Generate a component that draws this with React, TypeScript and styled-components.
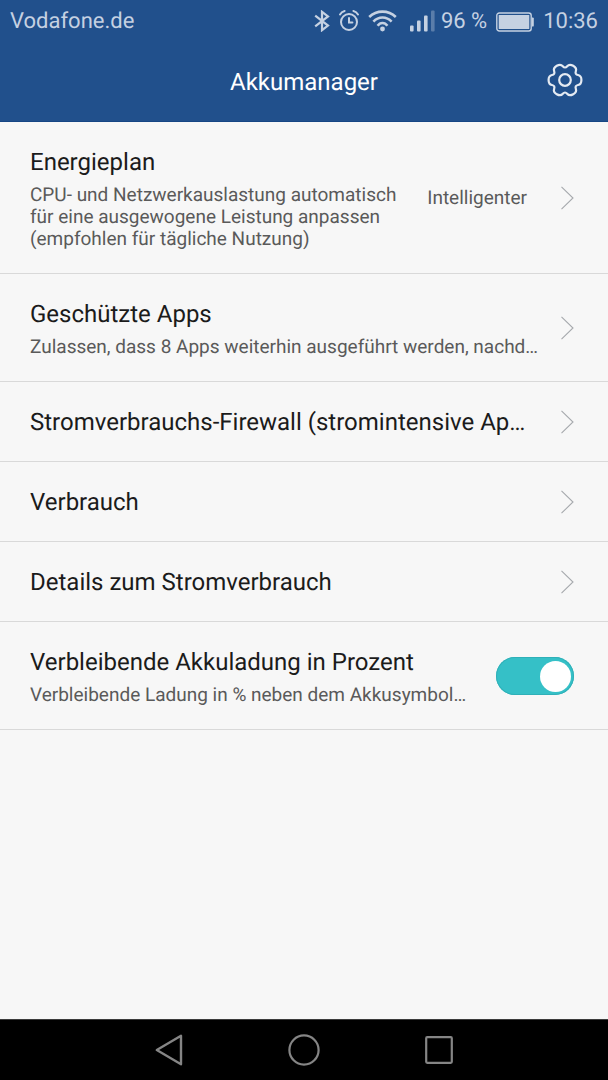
import React, { useState } from 'react';
import styled, { createGlobalStyle } from 'styled-components';

const GlobalStyle = createGlobalStyle`
  *, *::before, *::after { box-sizing: border-box; }
  body {
    margin: 0;
    background: #f7f7f7;
    font-family: Roboto, "Noto Sans", sans-serif;
    text-rendering: geometricPrecision;
  }
  button {
    margin: 0;
    border: 0;
    padding: 0;
    background: none;
    color: inherit;
    font: inherit;
    text-align: left;
    text-rendering: inherit;
    cursor: pointer;
  }
  svg { display: block; flex: none; }
`;

const Screen = styled.div`
  display: flex;
  flex-direction: column;
  min-height: 100vh;
  background: #f7f7f7;
`;

const Header = styled.header`
  background: #21508c;
  border-bottom: 1px solid #164684;
`;

const StatusBar = styled.div`
  display: flex;
  align-items: center;
  height: 42px;
  padding: 2px 10px 0;
  color: #c5d1e2;
  font-size: 22px;
  line-height: 28px;
`;

const Carrier = styled.span`
  flex: 1;
`;

const StatusIcons = styled.div`
  display: flex;
  align-items: center;
  gap: 9px;
  margin-right: 6px;
  padding-bottom: 2px;
`;

const SignalGap = styled.span`
  margin-left: 4px;
`;

const BatteryGroup = styled.div`
  display: flex;
  align-items: center;
  gap: 9px;
`;

const AppBar = styled.div`
  display: grid;
  grid-template-columns: 1fr auto 1fr;
  align-items: center;
  height: 79px;
  padding: 0 25px;
`;

const AppTitle = styled.h1`
  grid-column: 2;
  margin: 0;
  color: #fff;
  font-size: 24px;
  font-weight: 400;
  line-height: 32px;
`;

const SettingsButton = styled.button`
  justify-self: end;
  padding-bottom: 3px;
`;

const Content = styled.main`
  flex: 1;
`;

const List = styled.ul`
  margin: 0;
  padding: 0;
  list-style: none;
`;

const Item = styled.li`
  border-bottom: 1px solid #d9d9d9;
`;

const RowButton = styled.button`
  display: flex;
  align-items: center;
  width: 100%;
  padding: 24px 34px 23px 30px;
`;

const RowLabel = styled.label`
  display: flex;
  align-items: center;
  width: 100%;
  padding: 24px 34px 23px 30px;
  cursor: pointer;
`;

const TextBlock = styled.span`
  display: flex;
  flex: 1;
  flex-direction: column;
  gap: 6px;
  min-width: 0;
  margin-right: 20px;
`;

const ItemTitle = styled.span`
  overflow: hidden;
  color: #1b1b1b;
  font-size: 24px;
  line-height: 32px;
  text-overflow: ellipsis;
  white-space: nowrap;
`;

const Summary = styled.span<{ $wrap?: boolean }>`
  overflow: hidden;
  color: #5a5a5a;
  font-size: 19px;
  line-height: 22px;
  text-overflow: ellipsis;
  white-space: ${(p) => (p.$wrap ? 'normal' : 'nowrap')};
`;

const Value = styled.span`
  margin-right: 33px;
  color: #5a5a5a;
  font-size: 19px;
  line-height: 22px;
`;

const Switch = styled.input`
  appearance: none;
  display: flex;
  flex: none;
  align-items: center;
  width: 78px;
  height: 38px;
  margin: 0;
  padding: 0 3px;
  border-radius: 19px;
  background: #b8b8b8;
  cursor: pointer;

  &::before {
    content: "";
    width: 31px;
    height: 31px;
    border-radius: 50%;
    background: #fff;
  }

  &:checked {
    justify-content: flex-end;
    background: #35c0c7;
    box-shadow: inset 0 0 0 1px #2fb0b8;
  }
`;

const NavBar = styled.nav`
  display: flex;
  height: 61px;
  padding: 0 102px;
  border-top: 1px solid #3c3c3c;
  background: #000;
`;

const NavButton = styled.button`
  display: flex;
  flex: 1;
  align-items: center;
  justify-content: center;
  color: #858585;
`;

const BluetoothIcon = () => (
  <svg width="16" height="22" viewBox="0 0 16 22" fill="none" stroke="currentColor" strokeWidth="2.2" aria-hidden="true">
    <path d="M1.2 5.6 14 15.6 8 20.2V1.8L14 6.4 1.2 16.4" />
  </svg>
);

const AlarmIcon = () => (
  <svg width="20" height="22" viewBox="0 0 20 22" fill="none" stroke="currentColor" strokeWidth="2" strokeLinecap="round" aria-hidden="true">
    <circle cx="10" cy="12" r="8" />
    <path d="M10 8v4.4h3.4M1 4.4Q2.6 1.8 5.6 1M19 4.4Q17.4 1.8 14.4 1" />
  </svg>
);

const WifiIcon = () => (
  <svg width="29" height="22" viewBox="0 0 29 22" fill="none" stroke="currentColor" strokeWidth="2.6" aria-hidden="true">
    <path d="M1.2 7Q6.8 1.6 14.5 1.6T27.8 7" />
    <path d="M5.4 11.6Q9.2 7.5 14.5 7.5t9.1 4.1" />
    <path d="M9.6 15.8Q11.6 13 14.5 13t4.9 2.8" />
    <circle cx="14.5" cy="19" r="2.4" fill="currentColor" stroke="none" />
  </svg>
);

const SignalIcon = () => (
  <svg width="25" height="22" viewBox="0 0 25 22" fill="currentColor" aria-hidden="true">
    <rect x="0" y="15.5" width="3.6" height="6" rx="1" />
    <rect x="7" y="10.5" width="3.6" height="11" rx="1" />
    <rect x="14" y="5.5" width="3.6" height="16" rx="1" />
    <rect x="21" y="0.5" width="3.6" height="21" rx="1" opacity="0.35" />
  </svg>
);

const BatteryIcon = () => (
  <svg width="38" height="20" viewBox="0 0 38 20" aria-hidden="true">
    <rect x="0.8" y="1" width="34.4" height="18" rx="2.5" fill="none" stroke="currentColor" strokeWidth="1.4" />
    <rect x="2.7" y="2.9" width="30.6" height="14.2" rx="0.5" fill="currentColor" />
    <path d="M36 5.4h.6q1.2 0 1.2 1.2v6.8q0 1.2-1.2 1.2H36z" fill="currentColor" />
  </svg>
);

/* Six-lobed cog outline: control points on two radii, smoothed through their midpoints. */
const cogPath = (() => {
  const points: number[][] = [];
  for (let lobe = 0; lobe < 6; lobe++) {
    const polar = [
      [17, -15],
      [17, 15],
      [11.2, 30],
    ];
    polar.forEach(([radius, angle]) => {
      const rad = ((lobe * 60 + angle) * Math.PI) / 180;
      points.push([18 + radius * Math.cos(rad), 18 + radius * Math.sin(rad)]);
    });
  }
  const mid = (a: number[], b: number[]) =>
    `${((a[0] + b[0]) / 2).toFixed(2)} ${((a[1] + b[1]) / 2).toFixed(2)}`;
  const last = points[points.length - 1];
  return (
    `M${mid(last, points[0])}` +
    points
      .map((p, i) => `Q${p[0].toFixed(2)} ${p[1].toFixed(2)} ${mid(p, points[(i + 1) % points.length])}`)
      .join('') +
    'Z'
  );
})();

const CogIcon = () => (
  <svg width="36" height="36" viewBox="0 0 36 36" fill="none" stroke="#e4eaf2" strokeWidth="2.2" aria-hidden="true">
    <path d={cogPath} />
    <circle cx="18" cy="18" r="5.8" />
  </svg>
);

const Chevron = () => (
  <svg width="14" height="24" viewBox="0 0 14 24" fill="none" stroke="#a6a9ad" strokeWidth="1.1" aria-hidden="true">
    <path d="M1.5 0.8 13 12 1.5 23.2" />
  </svg>
);

const BackIcon = () => (
  <svg width="28" height="32" viewBox="0 0 28 32" fill="none" stroke="currentColor" strokeWidth="2.4" strokeLinejoin="round" aria-hidden="true">
    <path d="M26 1.8v28.4L1.8 16z" />
  </svg>
);

const HomeIcon = () => (
  <svg width="32" height="32" viewBox="0 0 32 32" fill="none" stroke="currentColor" strokeWidth="2.2" aria-hidden="true">
    <circle cx="16" cy="16" r="14.6" />
  </svg>
);

const RecentIcon = () => (
  <svg width="28" height="28" viewBox="0 0 28 28" fill="none" stroke="currentColor" strokeWidth="2.2" aria-hidden="true">
    <rect x="1.2" y="1.2" width="25.6" height="25.6" rx="1" />
  </svg>
);

interface Entry {
  title: string;
  summary?: string;
  value?: string;
}

const entries: Entry[] = [
  {
    title: 'Energieplan',
    summary:
      'CPU- und Netzwerkauslastung automatisch für eine ausgewogene Leistung anpassen (empfohlen für tägliche Nutzung)',
    value: 'Intelligenter',
  },
  {
    title: 'Geschützte Apps',
    summary: 'Zulassen, dass 8 Apps weiterhin ausgeführt werden, nachd…',
  },
  { title: 'Stromverbrauchs-Firewall (stromintensive Ap…' },
  { title: 'Verbrauch' },
  { title: 'Details zum Stromverbrauch' },
];

export default function App() {
  const [showPercent, setShowPercent] = useState(true);

  return (
    <Screen>
      <GlobalStyle />
      <Header>
        <StatusBar>
          <Carrier>Vodafone.de</Carrier>
          <StatusIcons>
            <BluetoothIcon />
            <AlarmIcon />
            <WifiIcon />
            <SignalGap>
              <SignalIcon />
            </SignalGap>
          </StatusIcons>
          <BatteryGroup>
            <span>96 %</span>
            <BatteryIcon />
            <span>10:36</span>
          </BatteryGroup>
        </StatusBar>
        <AppBar>
          <AppTitle>Akkumanager</AppTitle>
          <SettingsButton type="button" aria-label="Einstellungen">
            <CogIcon />
          </SettingsButton>
        </AppBar>
      </Header>

      <Content>
        <List>
          {entries.map((entry) => (
            <Item key={entry.title}>
              <RowButton type="button">
                <TextBlock>
                  <ItemTitle>{entry.title}</ItemTitle>
                  {entry.summary && <Summary $wrap={Boolean(entry.value)}>{entry.summary}</Summary>}
                </TextBlock>
                {entry.value && <Value>{entry.value}</Value>}
                <Chevron />
              </RowButton>
            </Item>
          ))}
          <Item>
            <RowLabel htmlFor="battery-percent">
              <TextBlock>
                <ItemTitle>Verbleibende Akkuladung in Prozent</ItemTitle>
                <Summary>Verbleibende Ladung in % neben dem Akkusymbol…</Summary>
              </TextBlock>
              <Switch
                id="battery-percent"
                type="checkbox"
                role="switch"
                checked={showPercent}
                onChange={(e) => setShowPercent(e.target.checked)}
              />
            </RowLabel>
          </Item>
        </List>
      </Content>

      <NavBar>
        <NavButton type="button" aria-label="Zurück">
          <BackIcon />
        </NavButton>
        <NavButton type="button" aria-label="Startbildschirm">
          <HomeIcon />
        </NavButton>
        <NavButton type="button" aria-label="Letzte Apps">
          <RecentIcon />
        </NavButton>
      </NavBar>
    </Screen>
  );
}
